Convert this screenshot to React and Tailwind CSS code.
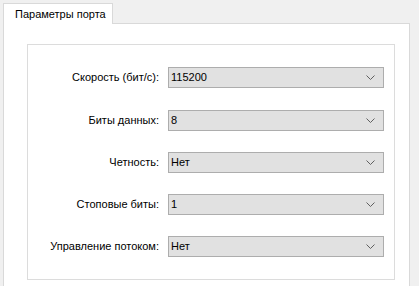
import React from "react";

const rows = [
  ["Скорость (бит/с):", "115200"],
  ["Биты данных:", "8"],
  ["Четность:", "Нет"],
  ["Стоповые биты:", "1"],
  ["Управление потоком:", "Нет"],
];

function Chevron() {
  return (
    <svg width="9" height="5" viewBox="0 0 9 5" className="shrink-0">
      <path d="M0.5 0.5 L4.5 4.5 L8.5 0.5" fill="none" stroke="#606060" strokeWidth="1" />
    </svg>
  );
}

export default function App() {
  return (
    <div
      className="w-[419px] h-[286px] bg-[#f0f0f0] overflow-hidden pt-[3px] pl-[3px] pr-[9px] text-[11px] text-black"
      style={{ fontFamily: '"Liberation Sans", Arial, sans-serif' }}
    >
      <div className="relative z-10 w-[110px] h-[21px] bg-white border border-b-0 border-[#d9d9d9] flex items-center pl-[11px] leading-none whitespace-nowrap">
        Параметры порта
      </div>
      <div className="-mt-[1px] h-[300px] bg-white border border-[#d9d9d9] pl-[23px] pr-[14px] pt-[20px]">
        <div className="border border-[#dcdcdc] pt-[22px] pb-[22px] pr-[10px] flex flex-col gap-[21px]">
          {rows.map(([label, value]) => (
            <div key={label} className="flex items-center h-[21px] first:mb-px">
              <div className="flex-1 flex justify-end leading-none whitespace-nowrap">{label}</div>
              <div className="ml-[9px] w-[216px] shrink-0 h-[21px] bg-[#e1e1e1] border border-[#adadad] flex items-center justify-between pl-[2px] pr-[8px] leading-none">
                <span>{value}</span>
                <Chevron />
              </div>
            </div>
          ))}
        </div>
      </div>
    </div>
  );
}
